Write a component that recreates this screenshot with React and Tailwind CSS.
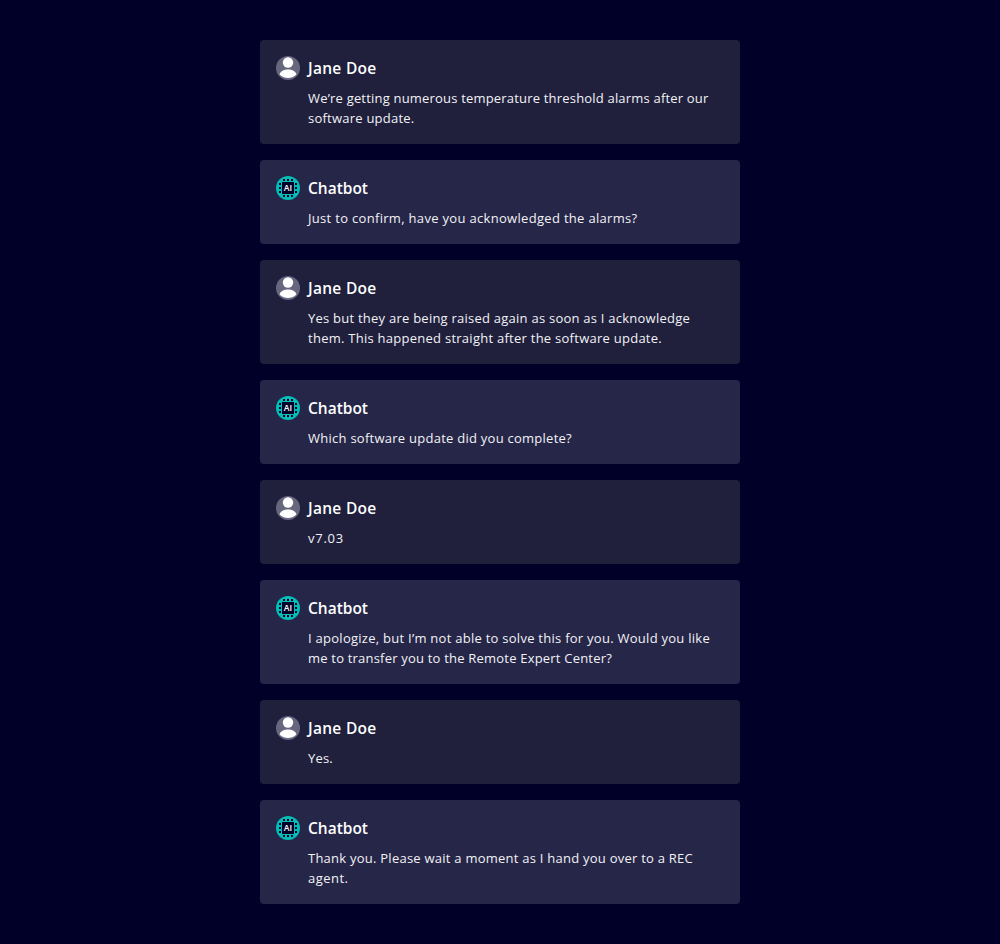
const messages = [
  { user: true, lines: [['We’re getting numerous temperature threshold alarms after our', 400.5], ['software update.', 106.5]] },
  { user: false, lines: [['Just to confirm, have you acknowledged the alarms?', 329.5]] },
  { user: true, lines: [['Yes but they are being raised again as soon as I acknowledge', 382], ['them. This happened straight after the software update.', 354]] },
  { user: false, lines: [['Which software update did you complete?', 264]] },
  { user: true, lines: [['v7.03', 36]] },
  { user: false, lines: [['I apologize, but I’m not able to solve this for you. Would you like', 402], ['me to transfer you to the Remote Expert Center?', 304]] },
  { user: true, lines: [['Yes.', 25]] },
  { user: false, lines: [['Thank you. Please wait a moment as I hand you over to a REC', 385], ['agent.', 40.5]] },
];

function UserAvatar() {
  return (
    <svg width="24" height="24" viewBox="0 0 24 24" className="shrink-0">
      <circle cx="12" cy="12" r="12" fill="#66667e" />
      <circle cx="12" cy="6.5" r="5.2" fill="#fff" />
      <path d="M3.5 18.3C4.5 15.2 7.8 13.5 12 13.5s7.5 1.7 8.5 4.8C18.5 20.8 15.5 22.1 12 22.1s-6.5-1.3-8.5-3.8Z" fill="#fff" />
    </svg>
  );
}

function BotAvatar() {
  const pins = [7, 11, 15];
  return (
    <svg width="24" height="24" viewBox="0 0 24 24" className="shrink-0">
      <circle cx="12" cy="12" r="12" fill="#00bdb6" />
      <g fill="#000028">
        <rect x="6" y="6" width="12" height="12" />
        {pins.map((p) => (
          <g key={p}>
            <rect x={p} y="3" width="2" height="2" />
            <rect x={p} y="19" width="2" height="2" />
            <rect x="3" y={p} width="2" height="2" />
            <rect x="19" y={p} width="2" height="2" />
          </g>
        ))}
      </g>
      <text x="12" y="15" textAnchor="middle" fill="#fff" textLength="8.4" lengthAdjust="spacingAndGlyphs" className="font-['Open_Sans',sans-serif] text-[8px] font-semibold">AI</text>
    </svg>
  );
}

// Letter spacing that brings a line to its designed width.
function fit(el) {
  if (!el) return;
  el.style.letterSpacing = '0px';
  const width = Number(el.dataset.width);
  const spacing = (width - el.getBoundingClientRect().width) / el.textContent.length;
  el.style.letterSpacing = `${spacing}px`;
}

function Message({ user, lines }) {
  return (
    <article className={`rounded p-4 ${user ? 'bg-[#20203d]' : 'bg-[#262648]'}`}>
      <header className="flex h-6 items-center gap-2">
        {user ? <UserAvatar /> : <BotAvatar />}
        <h2 className="text-[15.5px] leading-6 font-semibold text-white">
          <span ref={fit} data-width={user ? 68.5 : 60} className="inline-block whitespace-nowrap">{user ? 'Jane Doe' : 'Chatbot'}</span>
        </h2>
      </header>
      <div className="mt-2 pl-8 text-[13px] leading-5 text-[#f2f2f5]">
        {lines.map(([text, width]) => (
          <p key={text} className="h-5">
            <span ref={fit} data-width={width} className="inline-block whitespace-nowrap">{text}</span>
          </p>
        ))}
      </div>
    </article>
  );
}

export default function App() {
  return (
    <main className="flex min-h-[944px] justify-center bg-[#000028] py-10 font-['Open_Sans',sans-serif]">
      <div className="flex w-[480px] flex-col gap-4">
        {messages.map((m, i) => (
          <Message key={i} {...m} />
        ))}
      </div>
    </main>
  );
}
